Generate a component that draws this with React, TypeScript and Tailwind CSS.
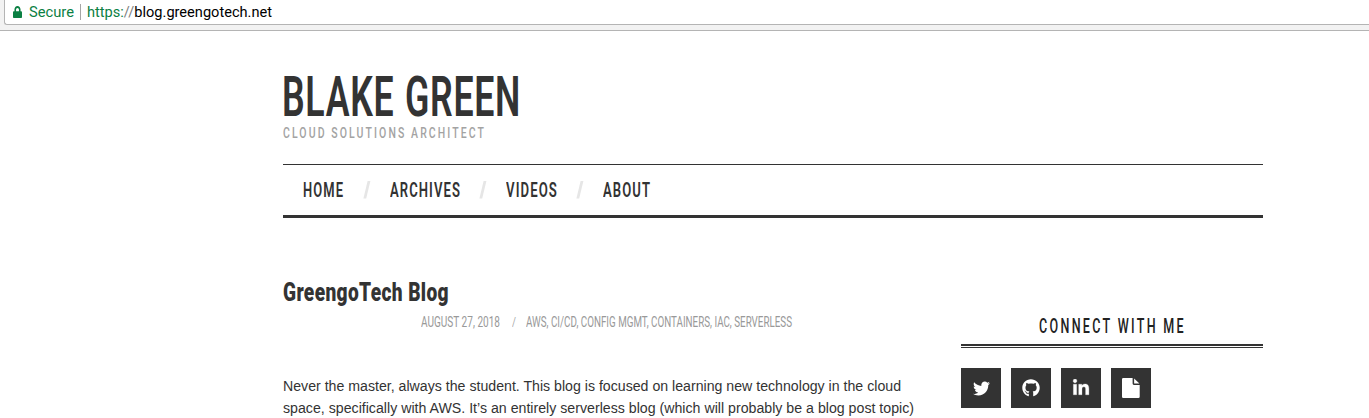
import { useLayoutEffect, useRef, useState } from "react";
import type { ReactNode } from "react";
import { FaTwitter, FaGithub, FaLinkedinIn, FaLock } from "react-icons/fa";

/** Condenses one line of text so that it fills the width of its box. */
function Fit({ className, children }: { className: string; children: ReactNode }) {
  const box = useRef<HTMLSpanElement>(null);
  const line = useRef<HTMLSpanElement>(null);
  const [scale, setScale] = useState(1);
  useLayoutEffect(() => {
    if (box.current && line.current && line.current.offsetWidth) {
      setScale(box.current.offsetWidth / line.current.getBoundingClientRect().width);
    }
  }, []);
  return (
    <span ref={box} className={`block shrink-0 ${className}`}>
      <span
        ref={line}
        className="inline-block origin-left whitespace-nowrap align-top"
        style={{ transform: `scaleX(${scale})` }}
      >
        {children}
      </span>
    </span>
  );
}

function Slash() {
  return (
    <svg className="h-[18px] w-[8px] shrink-0" viewBox="0 0 8 18" aria-hidden="true">
      <path d="M4.6 0H7.4L3.2 17.5H0.4Z" fill="#e6e6e6" />
    </svg>
  );
}

function FileIcon() {
  return (
    <svg className="h-5 w-[18px]" viewBox="0 0 18 20" fill="currentColor" aria-hidden="true">
      <path d="M1.3 0H10.6V5.6Q10.6 6.9 11.9 6.9H17.7V18.7Q17.7 20 16.4 20H1.3Q0 20 0 18.7V1.3Q0 0 1.3 0Z" />
      <path d="M12.1 0.4L17.4 5.5H12.1Z" />
    </svg>
  );
}

function AddressBar() {
  return (
    <div className="h-[31px] border-b border-[#b4b4b4] bg-[#f2f2f2] pl-1">
      <div className="flex h-[25px] items-center rounded-bl-[3px] border-b border-l border-[#b4b4b4] bg-white pl-[8px] font-['Roboto',sans-serif] text-[14px] leading-[24px]">
        <FaLock className="mb-px h-[12px] w-[9px] shrink-0 text-[#0b8043]" preserveAspectRatio="none" />
        <Fit className="ml-[7px] w-[45px] text-[#0b8043]">Secure</Fit>
        <span className="ml-[6px] h-4 w-px bg-[#a6a6a6]" />
        <Fit className="ml-[6px] w-[185px] text-black">
          <span className="text-[#0b8043]">https:</span>
          <span className="text-[#808080]">//</span>blog.greengotech.net
        </Fit>
      </div>
    </div>
  );
}

function Social({ children }: { children: ReactNode }) {
  return (
    <a className="flex size-10 items-center justify-center bg-[#333] text-white">{children}</a>
  );
}

export default function App() {
  return (
    <div className="h-[418px] overflow-hidden bg-white font-['Roboto',sans-serif] text-[#333]">
      <AddressBar />
      <div className="ml-[283px] w-[980px]">
        <header className="h-[133px] pt-[41px]">
          <h1>
            <Fit className="ml-[-1px] h-[50px] w-[239px] text-[55px] leading-[50px] font-semibold tracking-[1px] [word-spacing:2px]">
              BLAKE GREEN
            </Fit>
          </h1>
          <Fit className="mt-px h-5 w-[203px] text-[15px] leading-5 font-medium tracking-[3px] text-[#a3a3a3]">
            CLOUD SOLUTIONS ARCHITECT
          </Fit>
        </header>
        <nav className="flex h-[54px] items-center border-t border-b-[3px] border-[#333] pl-5 text-[19.5px] leading-6 font-semibold tracking-[1.6px]">
          <Fit className="mt-px w-[41px]">HOME</Fit>
          <span className="ml-[19px]"><Slash /></span>
          <Fit className="mt-px ml-[19px] w-[71px]">ARCHIVES</Fit>
          <span className="ml-[18px]"><Slash /></span>
          <Fit className="mt-px ml-[19px] w-[52px]">VIDEOS</Fit>
          <span className="ml-[18px]"><Slash /></span>
          <Fit className="mt-px ml-[19px] w-[48px]">ABOUT</Fit>
        </nav>
        <div className="flex justify-between">
          <article className="w-[648px] pt-[60px]">
            <h2>
              <Fit className="h-7 w-[166px] text-[25.5px] leading-7 font-black tracking-[0.5px]">GreengoTech Blog</Fit>
            </h2>
            <div className="mt-[6px] flex h-5 pl-[138px] text-[15px] leading-5 text-[#999]">
              <Fit className="w-[79px]">AUGUST 27, 2018</Fit>
              <Fit className="ml-[12px] w-[4px] text-[12px] text-[#aaa]">/</Fit>
              <Fit className="ml-[10px] w-[266px]">AWS, CI/CD, CONFIG MGMT, CONTAINERS, IAC, SERVERLESS</Fit>
            </div>
            <p className="mt-[43px] font-['Liberation_Sans',sans-serif] text-[14px] leading-[22px]">
              <Fit className="w-[618px]">
                Never the master, always the student. This blog is focused on learning new technology in the cloud
              </Fit>
              <Fit className="w-[631px]">
                space, specifically with AWS. It’s an entirely serverless blog (which will probably be a blog post topic)
              </Fit>
            </p>
          </article>
          <aside className="w-[302px] pt-[97px]">
            <h3 className="flex h-[31px] justify-center border-b-2 border-[#333] text-[19.5px] leading-6 font-medium tracking-[3.6px] text-[#222]">
              <Fit className="w-[147px]">CONNECT WITH ME</Fit>
            </h3>
            <div className="mt-px h-px bg-[#333]" />
            <div className="mt-5 flex gap-[10px]">
              <Social><FaTwitter className="size-[17px]" /></Social>
              <Social><FaGithub className="size-[18px]" /></Social>
              <Social><FaLinkedinIn className="size-[18px] stroke-white [stroke-width:8]" /></Social>
              <Social><FileIcon /></Social>
            </div>
          </aside>
        </div>
      </div>
    </div>
  );
}
